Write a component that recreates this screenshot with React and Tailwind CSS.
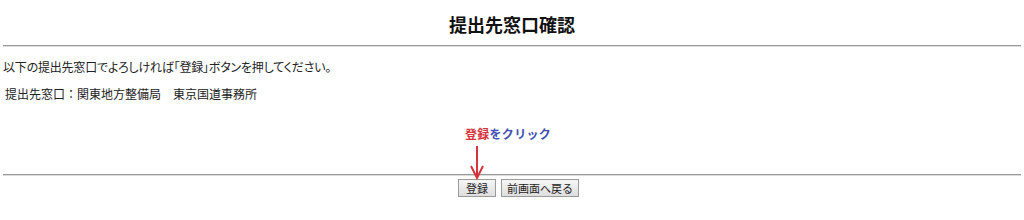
import React from "react";

export default function App() {
  const jp = { fontFamily: '"Noto Sans CJK JP", "Noto Sans", sans-serif' };
  return (
    <div className="w-[1024px] h-[220px] bg-white text-[#222] relative" style={jp}>
      <div className="h-[45px] flex items-center justify-center">
        <h1 className="text-[18px] font-bold leading-none text-[#111] mt-[2px]">提出先窓口確認</h1>
      </div>
      <div className="mx-[3px] h-[2px] border-t border-[#9a9a9a] border-b-[#dcdcdc] border-b"></div>
      <div className="pl-[3px] pt-[12px] text-[12px] leading-[16px] [font-feature-settings:'palt'] tracking-[-0.2px]">
        以下の提出先窓口でよろしければ「登録」ボタンを押してください。
      </div>
      <div className="pl-[5px] pt-[11px] text-[12px] leading-[16px]">
        提出先窓口：関東地方整備局　東京国道事務所
      </div>
      <div className="flex justify-center pt-[23px] pr-[8px]">
        <div className="text-[12px] font-bold leading-[18px] tracking-[0.3px]">
          <span className="text-[#d3343d]">登録</span>
          <span className="text-[#3f4fb3]">をクリック</span>
        </div>
      </div>
      <div className="mx-[3px] mt-[31px] h-[2px] border-t border-[#9a9a9a] border-b-[#dcdcdc] border-b"></div>
      <div className="flex justify-center gap-[5px] mt-[3px] pl-[13px]">
        <button className="h-[18px] px-[7px] text-[11px] leading-none border border-[#9a9a9a] bg-gradient-to-b from-[#f6f6f6] to-[#dedede] text-[#222]">
          登録
        </button>
        <button className="h-[18px] px-[5px] text-[11px] leading-none border border-[#9a9a9a] bg-gradient-to-b from-[#f6f6f6] to-[#dedede] text-[#222]">
          前画面へ戻る
        </button>
      </div>
      <svg className="absolute left-[469px] top-[146px]" width="16" height="34" viewBox="0 0 16 34">
        <line x1="8" y1="0" x2="8" y2="31" stroke="#d3343d" strokeWidth="2" />
        <polyline points="2,20 8,32 14,20" fill="none" stroke="#d3343d" strokeWidth="2" />
      </svg>
    </div>
  );
}
